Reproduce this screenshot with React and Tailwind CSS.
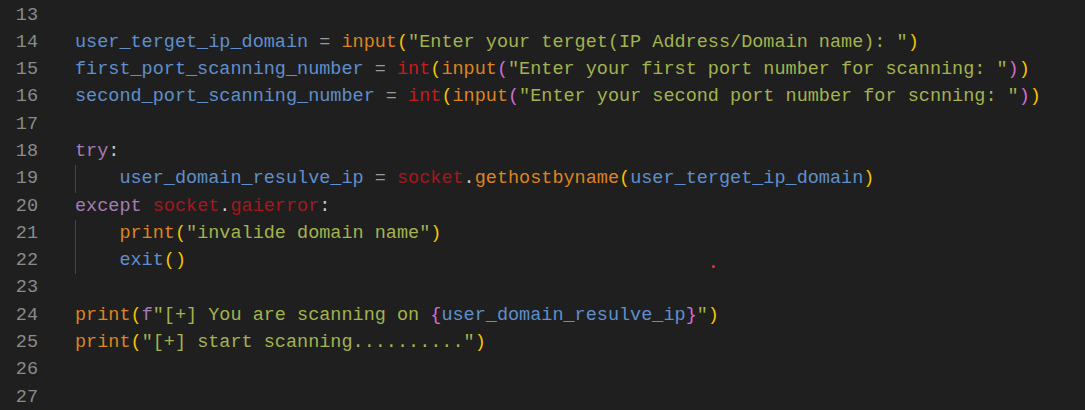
import React from 'react';

// token colours, written out in full so tailwind picks them up
const tone = {
  v: 'text-[#5f8fcc]', // variables
  s: 'text-[#a3b34f]', // strings
  f: 'text-[#de8420]', // function calls
  b: 'text-[#c41d1d]', // builtins (int)
  m: 'text-[#a3191c]', // module / exception names
  k: 'text-[#a57db5]', // keywords
  o: 'text-[#9a9a9a]', // operators, punctuation
  p: 'text-[#cccccc]',
  y: 'text-[#f5c400]', // bracket level 1
  q: 'text-[#d46bd8]', // bracket level 2
};

const lines = [
  { n: 13, t: [] },
  {
    n: 14,
    t: [
      ['v', 'user_terget_ip_domain'],
      ['o', ' = '],
      ['f', 'input'],
      ['y', '('],
      ['s', '"Enter your terget(IP Address/Domain name): "'],
      ['y', ')'],
    ],
  },
  {
    n: 15,
    t: [
      ['v', 'first_port_scanning_number'],
      ['o', ' = '],
      ['b', 'int'],
      ['y', '('],
      ['f', 'input'],
      ['q', '('],
      ['s', '"Enter your first port number for scanning: "'],
      ['q', ')'],
      ['y', ')'],
    ],
  },
  {
    n: 16,
    t: [
      ['v', 'second_port_scanning_number'],
      ['o', ' = '],
      ['b', 'int'],
      ['y', '('],
      ['f', 'input'],
      ['q', '('],
      ['s', '"Enter your second port number for scnning: "'],
      ['q', ')'],
      ['y', ')'],
    ],
  },
  { n: 17, t: [] },
  { n: 18, t: [['k', 'try'], ['p', ':']] },
  {
    n: 19,
    indent: true,
    t: [
      ['v', 'user_domain_resulve_ip'],
      ['o', ' = '],
      ['m', 'socket'],
      ['p', '.'],
      ['f', 'gethostbyname'],
      ['y', '('],
      ['v', 'user_terget_ip_domain'],
      ['y', ')'],
    ],
  },
  {
    n: 20,
    t: [
      ['k', 'except '],
      ['m', 'socket'],
      ['p', '.'],
      ['m', 'gaierror'],
      ['p', ':'],
    ],
  },
  {
    n: 21,
    indent: true,
    t: [['f', 'print'], ['y', '('], ['s', '"invalide domain name"'], ['y', ')']],
  },
  { n: 22, indent: true, dot: true, t: [['v', 'exit'], ['y', '()']] },
  { n: 23, t: [] },
  {
    n: 24,
    t: [
      ['f', 'print'],
      ['y', '('],
      ['k', 'f'],
      ['s', '"[+] You are scanning on '],
      ['q', '{'],
      ['v', 'user_domain_resulve_ip'],
      ['q', '}'],
      ['s', '"'],
      ['y', ')'],
    ],
  },
  {
    n: 25,
    t: [['f', 'print'], ['y', '('], ['s', '"[+] start scanning.........."'], ['y', ')']],
  },
  { n: 26, t: [] },
  { n: 27, t: [] },
];

export default function App() {
  return (
    <div
      className="w-[1085px] h-[410px] overflow-hidden bg-[#1f1f1f] pt-[1.5px] text-[18.5px] leading-[27.3px]"
      style={{ fontFamily: '"Liberation Mono", "DejaVu Sans Mono", monospace' }}
    >
      {lines.map((line) => (
        <div key={line.n} className="flex h-[27.3px] whitespace-pre">
          <span className="w-[38px] text-right text-[#8a8a8a]">{line.n}</span>
          <div className="relative ml-[37px] flex-1">
            {line.indent && (
              <span className="inline-block w-[4ch] h-[27.3px] align-top border-l border-[#474747]" />
            )}
            {line.t.map(([k, text], i) => (
              <span key={i} className={tone[k]}>
                {text}
              </span>
            ))}
            {line.dot && (
              <span className="absolute left-[637px] top-[18px] w-[3px] h-[3px] bg-[#e23a3a] rounded-full" />
            )}
          </div>
        </div>
      ))}
    </div>
  );
}
